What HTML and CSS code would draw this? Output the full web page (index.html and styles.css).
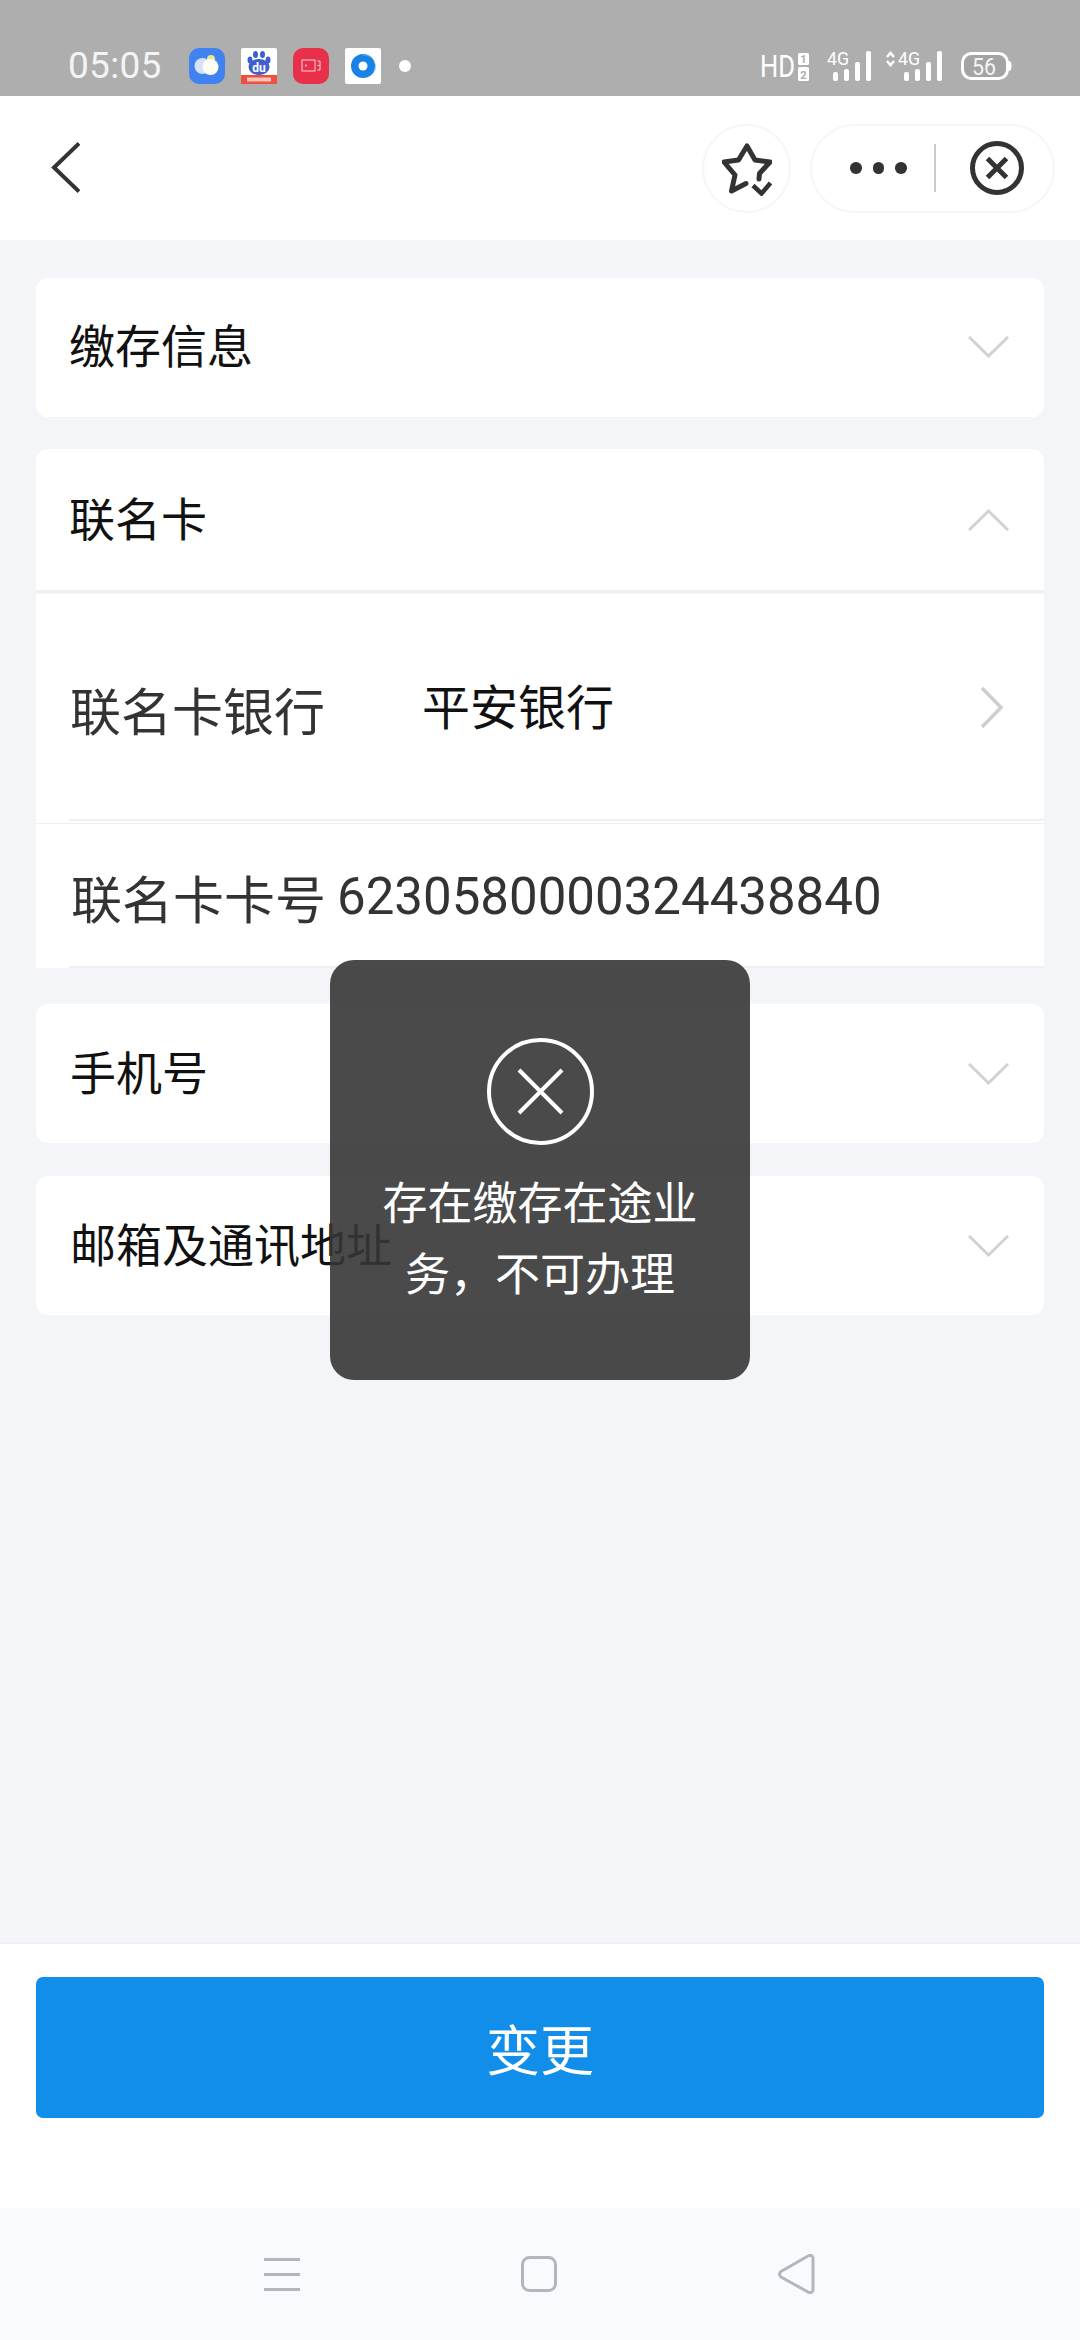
FILE: index.html
```html
<!DOCTYPE html>
<html lang="zh-CN">
<head>
    <meta charset="UTF-8">
    <meta name="viewport" content="width=device-width, initial-scale=1.0">
    <title>联名卡变更</title>
    <link rel="stylesheet" href="styles.css">
</head>
<body>
    <div class="status-bar">
        <span class="time">05:05</span>
        <div class="notify-icons">
            <svg width="36" height="36" viewBox="0 0 36 36"><rect width="36" height="36" rx="10" fill="#3f82f0"/><circle cx="13.5" cy="18" r="8" fill="#d6e2fa"/><circle cx="22" cy="11" r="4" fill="#e6e88a"/><circle cx="21.5" cy="19" r="8" fill="#fdfdf5"/></svg>
            <svg width="36" height="36" viewBox="0 0 36 36"><rect width="36" height="36" rx="2" fill="#fff"/><ellipse cx="9" cy="12" rx="2.5" ry="3.5" fill="#3f5fd0"/><ellipse cx="14.5" cy="6.5" rx="2.5" ry="3.5" fill="#3f5fd0"/><ellipse cx="21.5" cy="6.5" rx="2.5" ry="3.5" fill="#3f5fd0"/><ellipse cx="27" cy="12" rx="2.5" ry="3.5" fill="#3f5fd0"/><ellipse cx="18" cy="19" rx="10.5" ry="8" fill="#3f5fd0"/><text x="18" y="24" class="du">du</text><rect y="27" width="36" height="9" fill="#ee4f3f"/><rect x="6" y="29.5" width="24" height="4" fill="#f9c6b8"/></svg>
            <svg width="36" height="36" viewBox="0 0 36 36"><rect width="36" height="36" rx="10" fill="#e8304a"/><rect x="9" y="12" width="13" height="11" fill="none" stroke="#f7d5da" stroke-width="1"/><circle cx="13" cy="17.500" r="0.900" fill="#f7d5da"/><path d="M24.500 13h2.500v9h-2.500M24.500 17.500h2" fill="none" stroke="#f7d5da" stroke-width="1"/></svg>
            <svg width="36" height="36" viewBox="0 0 36 36"><rect width="36" height="36" rx="2" fill="#fff"/><circle cx="18" cy="18" r="12" fill="#1a82e6"/><path d="M18 6a12 12 0 0 1 12 12a12 12 0 0 1-8 11a10 10 0 0 0-4-21z" fill="#3aa6f2"/><circle cx="18" cy="18" r="4.500" fill="#fff"/></svg>
            <span class="notify-dot"></span>
        </div>
        <svg class="status-right" width="280" height="50" viewBox="0 0 280 50">
            <text x="10" y="37" class="st-hd" textLength="35" lengthAdjust="spacingAndGlyphs">HD</text>
            <rect x="48" y="13" width="11" height="12" rx="1.500" fill="#fff"/>
            <rect x="48" y="27" width="11" height="14" rx="1.500" fill="#fff"/>
            <text x="53.500" y="23" class="st-sim">1</text>
            <text x="53.500" y="38.500" class="st-sim">2</text>

            <text x="77" y="25" class="st-net" textLength="22" lengthAdjust="spacingAndGlyphs">4G</text>
            <rect x="83" y="32" width="5" height="9" rx="2" fill="#fff"/>
            <rect x="94" y="29" width="5" height="12" rx="2" fill="#fff"/>
            <rect x="105" y="22" width="5" height="19" rx="2" fill="#fff"/>
            <rect x="116" y="11" width="5" height="30" rx="2" fill="#fff"/>

            <path d="M137 17l3.500-4 3.500 4M137 21l3.500 4 3.500-4" fill="none" stroke="#fff" stroke-width="2.500"/>
            <text x="148" y="25" class="st-net" textLength="22" lengthAdjust="spacingAndGlyphs">4G</text>
            <rect x="154" y="32" width="5" height="9" rx="2" fill="#fff"/>
            <rect x="165" y="29" width="5" height="12" rx="2" fill="#fff"/>
            <rect x="176" y="22" width="5" height="19" rx="2" fill="#fff"/>
            <rect x="187" y="11" width="5" height="30" rx="2" fill="#fff"/>

            <rect x="212.500" y="13.500" width="45" height="25" rx="9" fill="#a4a4a4" stroke="#fff" stroke-width="3"/>
            <path d="M259 21a2.500 5 0 0 1 0 10z" fill="#fff"/>
            <text x="234" y="35" class="st-batt" textLength="24" lengthAdjust="spacingAndGlyphs">56</text>
        </svg>
    </div>

    <div class="top-bar">
        <svg width="29" height="51" viewBox="0 0 29 51" class="back"><path d="M28 1.500L3 25.500l25 24" fill="none" stroke="#333" stroke-width="4"/></svg>
        <div class="top-actions">
            <div class="fav-btn">
                <svg width="50" height="53" viewBox="722 143 50 53"><path d="M746 183.500L731.500 191l3.500-16-11-13 14.500-2L747 146l8 14 15 2-10.500 11.500-.5 5.500" fill="none" stroke="#333" stroke-width="5" stroke-linejoin="round" stroke-linecap="round"/><path d="M753 185.500l8.500 8 9-10.500" fill="none" stroke="#333" stroke-width="4.500"/></svg>
            </div>
            <div class="capsule">
                <div class="dots"><span></span><span></span><span></span></div>
                <span class="capsule-sep"></span>
                <svg width="54" height="54" viewBox="0 0 54 54"><circle cx="27" cy="27" r="24.500" fill="none" stroke="#333" stroke-width="5"/><path d="M17.500 17.500l19 19M36.500 17.500l-19 19" fill="none" stroke="#333" stroke-width="5"/></svg>
            </div>
        </div>
    </div>

    <div class="content">
        <div class="card">
            <div class="card-head">
                <span>缴存信息</span>
                <svg class="chev" width="41" height="22" viewBox="0 0 41 22"><path d="M1 1l19.500 19L40 1" fill="none" stroke="#d2d2d2" stroke-width="3"/></svg>
            </div>
        </div>
        <div class="card card-open">
            <div class="card-head head-open">
                <span>联名卡</span>
                <svg class="chev" width="41" height="22" viewBox="0 0 41 22"><path d="M1 21L20.500 2 40 21" fill="none" stroke="#d2d2d2" stroke-width="3"/></svg>
            </div>
            <div class="field field-bank">
                <div class="field-inner">
                    <span class="field-label">联名卡银行</span>
                    <span class="field-value">平安银行</span>
                    <svg class="chev-right" width="22" height="41" viewBox="0 0 22 41"><path d="M1 1l19 19.500L1 40" fill="none" stroke="#cecece" stroke-width="3.500"/></svg>
                </div>
            </div>
            <div class="field-no">
                <span class="no-label">联名卡卡号</span>
                <span class="no-value">6230580000324438840</span>
            </div>
        </div>
        <div class="card card-phone">
            <div class="card-head head-low">
                <span>手机号</span>
                <svg class="chev" width="41" height="22" viewBox="0 0 41 22"><path d="M1 1l19.500 19L40 1" fill="none" stroke="#d2d2d2" stroke-width="3"/></svg>
            </div>
        </div>
        <div class="card">
            <div class="card-head head-low">
                <span>邮箱及通讯地址</span>
                <svg class="chev" width="41" height="22" viewBox="0 0 41 22"><path d="M1 1l19.500 19L40 1" fill="none" stroke="#d2d2d2" stroke-width="3"/></svg>
            </div>
        </div>
    </div>

    <div class="footer">
        <button class="submit-btn">变更</button>
    </div>

    <div class="nav-bar">
        <svg width="36" height="33" viewBox="0 0 36 33"><path d="M0 1.500h36M0 16.500h36M0 31.500h36" stroke="#b5b6bb" stroke-width="3"/></svg>
        <svg width="36" height="36" viewBox="0 0 36 36"><rect x="1.500" y="1.500" width="33" height="33" rx="7" fill="none" stroke="#b5b6bb" stroke-width="3"/></svg>
        <svg width="37" height="40" viewBox="0 0 37 40"><path d="M3 23c-2-1.500-2-4 0-5.500L30 2c2.500-1.300 5-.5 5 2.500v31c0 3-2.500 4-5 2.500z" fill="none" stroke="#b5b6bb" stroke-width="3"/></svg>
    </div>

    <div class="toast">
        <svg width="107" height="107" viewBox="0 0 107 107"><circle cx="53.500" cy="53.500" r="51.500" fill="none" stroke="#fff" stroke-width="4"/><path d="M32 32l43 43M75 32L32 75" stroke="#fff" stroke-width="4"/></svg>
        <p>存在缴存在途业务，不可办理</p>
    </div>
</body>
</html>
```

FILE: styles.css
```css
* {
    box-sizing: border-box;
}
html, body {
    margin: 0;
    padding: 0;
}
body {
    position: relative;
    width: 1080px;
    height: 2340px;
    overflow: hidden;
    display: flex;
    flex-direction: column;
    background-color: #f4f5f9;
    font-family: "Noto Sans CJK SC", Roboto, sans-serif;
    color: #111;
}

/* status bar */
.status-bar {
    height: 96px;
    flex-shrink: 0;
    display: flex;
    align-items: flex-start;
    background-color: #aeaeae;
    color: #f4f4f4;
}
.time {
    margin: 44px 0 0 68px;
    width: 121px;
    font-family: Roboto, sans-serif;
    font-size: 37px;
    line-height: 44px;
    letter-spacing: 0.3px;
}
.notify-icons {
    margin-top: 48px;
    display: flex;
    align-items: center;
    gap: 16px;
}
.notify-dot {
    width: 12px;
    height: 12px;
    margin-left: 2px;
    border-radius: 50%;
    background-color: #fff;
}
.status-right {
    margin: 40px 0 0 auto;
    margin-right: 50px;
}
.status-right text {
    font-family: Roboto, sans-serif;
}
.du {
    font-family: Roboto, sans-serif;
    font-size: 12px;
    font-weight: 700;
    fill: #fff;
    text-anchor: middle;
}
.st-hd {
    font-size: 32px;
    fill: #fff;
}
.st-sim {
    font-size: 11px;
    font-weight: 700;
    fill: #aeaeae;
    text-anchor: middle;
}
.st-net {
    font-size: 19px;
    fill: #fff;
}
.st-batt {
    font-size: 24px;
    fill: #f4f4f4;
    text-anchor: middle;
}

/* top bar */
.top-bar {
    height: 144px;
    flex-shrink: 0;
    display: flex;
    align-items: center;
    justify-content: space-between;
    padding: 0 25px 0 51px;
    background-color: #fff;
}
.back {
    margin-top: -1px;
}
.top-actions {
    display: flex;
    gap: 19px;
}
.fav-btn {
    width: 89px;
    height: 89px;
    display: flex;
    align-items: center;
    justify-content: center;
    border: 2px solid #f6f6f6;
    border-radius: 50%;
}
.fav-btn svg {
    margin: 3px 0 0 1px;
}
.capsule {
    width: 245px;
    height: 89px;
    display: flex;
    align-items: center;
    border: 2px solid #f6f6f6;
    border-radius: 45px;
    padding-left: 38px;
}
.dots {
    display: flex;
    gap: 11px;
}
.dots span {
    width: 11.500px;
    height: 11.500px;
    border-radius: 50%;
    background-color: #333;
}
.capsule-sep {
    width: 2px;
    height: 48px;
    margin: 0 34px 0 27px;
    background-color: #ccc;
}

/* form */
.content {
    flex: 1;
    padding: 38px 36px 0;
    display: flex;
    flex-direction: column;
    gap: 33px;
}
.card {
    background-color: #fff;
    border-radius: 12px;
}
.card-open {
    margin-top: -1px;
    border-radius: 12px 12px 0 0;
}
.card-phone {
    margin-top: 3px;
}
.card-head {
    height: 139px;
    display: flex;
    align-items: center;
    justify-content: space-between;
    padding: 0 35px 9px 33px;
    font-size: 46px;
    line-height: 60px;
}
.head-open {
    height: 144px;
    padding-bottom: 7px;
    border-bottom: 3px solid #f0f0f0;
}
.head-low {
    padding: 0 35px 7px 34px;
}
.chev {
    margin-top: 8px;
    flex-shrink: 0;
}
.field {
    height: 231px;
    padding-bottom: 2px;
    border-top: 1px solid #f5f5f5;
    border-bottom: 1px solid #f0f0f0;
}
.field-inner {
    height: 100%;
    margin-left: 33px;
    padding-right: 41px;
    display: flex;
    align-items: center;
    border-bottom: 2px solid #f0f0f0;
}
.field-label {
    width: 353px;
    padding: 4px 0 0 1px;
    font-size: 51px;
    line-height: 66px;
    color: #333;
    flex-shrink: 0;
}
.field-value {
    flex: 1;
    margin-top: -5px;
    font-size: 48px;
    line-height: 64px;
}
.chev-right {
    margin-top: 2px;
}
.field-no {
    height: 144px;
    margin-left: 33px;
    padding: 4px 0 0 2px;
    display: flex;
    align-items: center;
    gap: 11px;
    border-bottom: 2px solid #f0f0f0;
    color: #333;
}
.no-label {
    font-size: 51px;
    line-height: 66px;
}
.no-value {
    font-family: Roboto, sans-serif;
    font-size: 51px;
    line-height: 66px;
}

/* bottom */
.footer {
    height: 266px;
    flex-shrink: 0;
    padding: 33px 36px 0;
    background-color: #fff;
    border-top: 2px solid #f0f0f2;
}
.submit-btn {
    display: block;
    width: 100%;
    height: 141px;
    border: none;
    border-radius: 7px;
    background-color: #118eea;
    color: #fff;
    font-family: "Noto Sans CJK SC", sans-serif;
    font-size: 54px;
}
.nav-bar {
    height: 132px;
    flex-shrink: 0;
    display: flex;
    align-items: center;
    padding: 0 265px 0 264px;
    justify-content: space-between;
    background-color: #f9fafd;
}

/* overlay */
.toast {
    position: absolute;
    left: 330px;
    top: 960px;
    width: 420px;
    height: 420px;
    padding-top: 78px;
    display: flex;
    flex-direction: column;
    align-items: center;
    border-radius: 24px;
    background-color: rgba(54, 54, 54, 0.9);
    color: #fff;
}
.toast p {
    width: 320px;
    margin: 20px 0 0;
    font-size: 45px;
    line-height: 71px;
    text-align: center;
}
```
